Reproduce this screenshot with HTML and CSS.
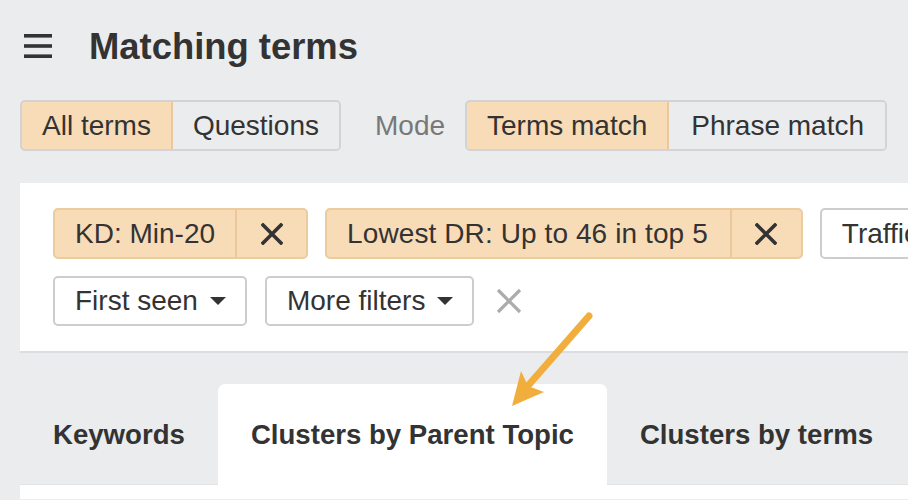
FILE: index.html
```html
<!DOCTYPE html>
<html>
<head>
<meta charset="utf-8">
<link rel="stylesheet" href="styles.css">
</head>
<body>
<div class="page">
  <header class="header">
    <svg class="burger" width="28" height="24" viewBox="0 0 28 24"><rect x="0" y="0" width="28" height="3.6" fill="#333"/><rect x="0" y="10.2" width="28" height="3.6" fill="#333"/><rect x="0" y="20.4" width="28" height="3.6" fill="#333"/></svg>
    <h1 class="title">Matching terms</h1>
  </header>

  <div class="toolbar">
    <div class="seg">
      <span class="seg-btn active">All terms</span>
      <span class="seg-btn">Questions</span>
    </div>
    <span class="mode">Mode</span>
    <div class="seg">
      <span class="seg-btn active">Terms match</span>
      <span class="seg-btn wide">Phrase match</span>
    </div>
  </div>

  <section class="panel">
    <div class="chip-row">
      <div class="chip">
        <span class="chip-label">KD: Min-20</span>
        <span class="chip-x"><svg width="22" height="22" viewBox="0 0 22 22"><path d="M2 2L20 20M20 2L2 20" stroke="#333" stroke-width="3.6" stroke-linecap="square"/></svg></span>
      </div>
      <div class="chip">
        <span class="chip-label wide">Lowest DR: Up to 46 in top 5</span>
        <span class="chip-x"><svg width="22" height="22" viewBox="0 0 22 22"><path d="M2 2L20 20M20 2L2 20" stroke="#333" stroke-width="3.6" stroke-linecap="square"/></svg></span>
      </div>
      <div class="drop">Traffic<span class="caret"></span></div>
    </div>
    <div class="chip-row second">
      <div class="drop">First seen<span class="caret"></span></div>
      <div class="drop">More filters<span class="caret"></span></div>
      <svg class="clear" width="26" height="26" viewBox="0 0 26 26"><path d="M2 2L24 24M24 2L2 24" stroke="#acacac" stroke-width="3.2"/></svg>
    </div>
  </section>

  <nav class="tabs">
    <span class="tab">Keywords</span>
    <span class="tab active">Clusters by Parent Topic</span>
    <span class="tab">Clusters by terms</span>
  </nav>
  <div class="content"></div>
</div>

<svg class="arrow" width="908" height="500" viewBox="0 0 908 500">
  <path d="M589 316L519 396" stroke="#f2ae3c" stroke-width="7" stroke-linecap="round" fill="none"/>
  <path d="M512 406L521 371L528 386L544 392Z" fill="#f2ae3c"/>
</svg>
</body>
</html>
```

FILE: styles.css
```css
html, body {
  margin: 0;
  padding: 0;
}
body {
  background: #ebecee;
  font-family: "Liberation Sans", Arial, Helvetica, sans-serif;
  color: #333;
  width: 908px;
  height: 500px;
  overflow: hidden;
  position: relative;
}
.page {
  padding-left: 20px;
}
.header {
  display: flex;
  align-items: center;
  padding-top: 27px;
  padding-left: 4px;
  height: 40px;
}
.burger {
  display: block;
  margin-top: -3px;
}
.title {
  margin: 0 0 0 37px;
  font-size: 36.4px;
  line-height: 40px;
  font-weight: bold;
  color: #333;
}
.toolbar {
  display: flex;
  align-items: center;
  margin-top: 33px;
  height: 51px;
}
.seg {
  display: flex;
  height: 51px;
  border: 2px solid #d3d3d5;
  border-radius: 5px;
  box-sizing: border-box;
  overflow: hidden;
}
.seg-btn {
  font-size: 28px;
  line-height: 47px;
  padding: 0 20px;
  color: #333;
  background: #ebecee;
}
.seg-btn.wide {
  padding: 0 21px 0 22px;
}
.seg-btn.active {
  background: #f8dcb7;
  border-right: 2px solid #eac89c;
}
.seg .seg-btn.active:first-child {
  margin: -2px 0 -2px -2px;
  border: 2px solid #eac89c;
  border-radius: 5px 0 0 5px;
  line-height: 47px;
}
.mode {
  font-size: 28px;
  color: #787878;
  margin: 0 20px 0 34px;
}
.panel {
  margin-top: 32px;
  background: #fff;
  border-bottom: 2px solid #dcdde0;
  padding: 25px 0 25px 33px;
  overflow: hidden;
}
.chip-row {
  display: flex;
  align-items: center;
  gap: 17px;
  white-space: nowrap;
}
.chip-row.second {
  margin-top: 17px;
  gap: 18px;
}
.chip {
  display: flex;
  height: 51px;
  box-sizing: border-box;
  background: #f8dcb7;
  border: 2px solid #eccb9f;
  border-radius: 5px;
  flex: none;
}
.chip-label {
  font-size: 28px;
  line-height: 47px;
  padding: 0 20px;
}
.chip-label.wide {
  padding: 0 22px 0 20px;
  letter-spacing: 0.1px;
}
.chip-x {
  display: flex;
  align-items: center;
  justify-content: center;
  width: 69px;
  border-left: 2px solid #eac89c;
}
.chip-x svg {
  display: block;
}
.drop {
  display: flex;
  align-items: center;
  height: 51px;
  box-sizing: border-box;
  border: 2px solid #cdcdcf;
  border-radius: 5px;
  background: #fff;
  font-size: 28px;
  padding: 0 19px 0 20px;
  flex: none;
}
.second .drop {
  height: 50px;
}
.caret {
  display: inline-block;
  width: 0;
  height: 0;
  margin-left: 12px;
  border-left: 8px solid transparent;
  border-right: 8px solid transparent;
  border-top: 8px solid #333;
}
.clear {
  display: block;
  margin-left: 4px;
  flex: none;
}
.tabs {
  display: flex;
  margin-top: 31px;
  height: 100px;
  position: relative;
  z-index: 1;
}
.tab {
  display: block;
  padding: 35px 33px 0 33px;
  font-size: 27.6px;
  line-height: 32px;
  font-weight: bold;
  color: #333;
  white-space: nowrap;
}
.tab.active {
  background: #fff;
  border-radius: 7px 7px 0 0;
  margin-bottom: -1px;
}
.content {
  background: #fff;
  border-top: 1px solid #e2e3e5;
  height: 14px;
}
.arrow {
  position: absolute;
  left: 0;
  top: 0;
  z-index: 5;
  pointer-events: none;
}
```
